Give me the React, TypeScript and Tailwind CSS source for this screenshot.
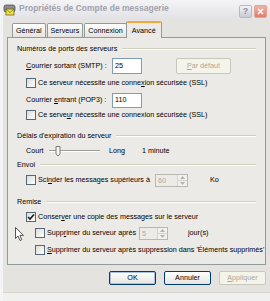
import React from "react"

function U({ children }: { children: React.ReactNode }) {
  return <span className="underline underline-offset-[1px]">{children}</span>
}

function Heading({ title, className = "" }: { title: string; className?: string }) {
  return (
    <div className={`flex items-center pl-[9px] pr-[9px] ${className}`}>
      <span>{title}</span>
      <div className="ml-[5px] flex-1 border-t border-b border-t-[#d0d0bf] border-b-white" />
    </div>
  )
}

function Check({ checked = false }: { checked?: boolean }) {
  return (
    <div className="flex h-[10px] w-[10px] shrink-0 items-center justify-center border border-[#56677a] bg-gradient-to-br from-[#dcdcd7] to-white">
      {checked && (
        <svg width="8" height="8" viewBox="0 0 8 8">
          <path d="M1 4 L3 6 L7 1.5" fill="none" stroke="#1d1d1d" strokeWidth="1.6" />
        </svg>
      )}
    </div>
  )
}

function Spinner({ value, w }: { value: string; w: string }) {
  return (
    <div className={`flex h-[13px] ${w} items-stretch border border-[#b9b8b0] bg-[#ecebe7]`}>
      <span className="flex-1 pl-[2px] leading-[11px] text-[#aca899]">{value}</span>
      <div className="flex w-[10px] flex-col border-l border-[#d4d3cd]">
        <div className="flex flex-1 items-center justify-center border-b border-[#d4d3cd] bg-[#f2f1ee]">
          <svg width="5" height="3" viewBox="0 0 5 3"><path d="M0 3 L2.5 0 L5 3Z" fill="#b4b3ad" /></svg>
        </div>
        <div className="flex flex-1 items-center justify-center bg-[#f2f1ee]">
          <svg width="5" height="3" viewBox="0 0 5 3"><path d="M0 0 L2.5 3 L5 0Z" fill="#b4b3ad" /></svg>
        </div>
      </div>
    </div>
  )
}

function Btn({ children, disabled = false, def = false }: { children: React.ReactNode; disabled?: boolean; def?: boolean }) {
  return (
    <div
      className={`flex h-[14px] w-[47px] items-center justify-center rounded-[2px] border ${
        disabled
          ? "border-[#c9c7ba] bg-[#f5f4ea] text-[#aca899]"
          : "border-[#003c74] bg-gradient-to-b from-white to-[#e6e5df] text-black"
      } ${def ? "shadow-[inset_0_0_0_1px_#a9bfe3]" : ""}`}
    >
      {children}
    </div>
  )
}

function Tab({ label, active = false }: { label: string; active?: boolean }) {
  if (active) {
    return (
      <div className="relative z-10 mb-[-1px] ml-[-2px] flex h-[17px] w-[36px] flex-col rounded-t-[2px] border-x border-[#919b9c] bg-[#ebeae6]">
        <div className="h-[2px] rounded-t-[2px] bg-[#f3a63c]" />
        <div className="flex flex-1 items-center justify-center">{label}</div>
      </div>
    )
  }
  return (
    <div className="mr-[1px] flex h-[14px] items-center justify-center rounded-t-[2px] border-x border-t border-[#919b9c] bg-gradient-to-b from-white to-[#e4e3de] px-[3px]">
      {label}
    </div>
  )
}

export default function App() {
  return (
    <div className="relative flex h-[301px] w-[270px] flex-col overflow-hidden border-l-[3px] border-[#f4f4f4] bg-[#e4e3df] font-['Liberation_Sans',Arial,sans-serif] text-[7.2px] leading-none text-black">
      {/* title bar */}
      <div className="ml-[-3px] flex h-[20px] items-center bg-gradient-to-b from-[#f4f4f6] to-[#e2e2e6] pl-[3px] pr-[3px]">
        <svg width="13" height="13" viewBox="0 0 13 13" className="shrink-0">
          <rect x="1" y="1" width="11" height="7" rx="2" fill="#8b8b8b" stroke="#555" strokeWidth="0.8" />
          <rect x="3" y="5" width="8" height="6" fill="#f2e24a" stroke="#6a6a20" strokeWidth="0.8" />
          <path d="M3 5 L7 8.5 L11 5" fill="none" stroke="#6a6a20" strokeWidth="0.7" />
        </svg>
        <span className="ml-[3px] mt-[-3px] text-[8.5px] font-bold text-[#a2a2ad]">Propriétés de Compte de messagerie</span>
        <div className="flex-1" />
        <div className="mt-[3px] flex h-[13px] w-[13px] items-center justify-center rounded-[2px] border border-[#b8b8c6] bg-gradient-to-b from-[#f4f4f8] to-[#c9c9d4] text-[9px] font-bold text-[#8d8da4]">
          ?
        </div>
        <div className="ml-[2px] mt-[3px] flex h-[13px] w-[13px] items-center justify-center rounded-[2px] border border-[#e0a395] bg-gradient-to-b from-[#f0b4a4] to-[#e07c68]">
          <svg width="7" height="7" viewBox="0 0 7 7">
            <path d="M1 1 L6 6 M6 1 L1 6" stroke="white" strokeWidth="1.5" />
          </svg>
        </div>
      </div>

      <div className="flex flex-col pl-[4px] pr-[4px]">
        {/* tabs */}
        <div className="flex h-[17px] items-end pl-[5px]">
          <Tab label="Général" />
          <Tab label="Serveurs" />
          <Tab label="Connexion" />
          <Tab label="Avancé" active />
        </div>

        {/* panel */}
        <div className="flex h-[228px] flex-col border border-[#919b9c] bg-[#ebeae6] pt-[4px]">
          <Heading title="Numéros de ports des serveurs" className="h-[14px]" />

          <div className="mt-[1px] flex h-[18px] items-center pl-[18px]">
            <span className="w-[86px]"><U>C</U>ourrier sortant (SMTP) :</span>
            <div className="flex h-[16px] w-[30px] items-center border border-[#7f9db9] bg-white pl-[2px]">25</div>
            <div className="ml-[34px] flex h-[16px] w-[55px] items-center justify-center rounded-[2px] border border-[#c9c7ba] bg-[#f5f4ea] text-[#aca899]">
              <U>P</U>ar défaut
            </div>
          </div>

          <div className="flex h-[16px] items-center pl-[18px]">
            <Check />
            <span className="ml-[2px]">Ce serveur nécessite une conne<U>x</U>ion sécurisée (SSL)</span>
          </div>

          <div className="flex h-[18px] items-center pl-[18px]">
            <span className="w-[86px]">Courrier <U>e</U>ntrant (POP3) :</span>
            <div className="flex h-[15px] w-[30px] items-center border border-[#7f9db9] bg-white pl-[2px]">110</div>
          </div>

          <div className="flex h-[12px] items-center pl-[18px]">
            <Check />
            <span className="ml-[2px]">Ce serve<U>u</U>r nécessite une connexion sécurisée (SSL)</span>
          </div>

          <Heading title="Délais d'expiration du serveur" className="mt-[8px] h-[14px]" />

          <div className="flex h-[16px] items-center pl-[18px]">
            <span className="w-[23px]">Court</span>
            <svg width="51" height="12" viewBox="0 0 51 12" className="shrink-0">
              <rect x="0" y="5" width="51" height="1" fill="#9d9c97" />
              <rect x="0" y="6" width="51" height="1" fill="#ffffff" />
              <path d="M7 1.5 H11 V9 L9 11 L7 9 Z" fill="#f6f6f4" stroke="#6f6e6a" strokeWidth="0.9" />
            </svg>
            <span className="ml-[9px] w-[33px]">Long</span>
            <span>1 minute</span>
          </div>

          <Heading title="Envoi" className="h-[12px]" />

          <div className="flex h-[18px] items-center pl-[18px]">
            <Check />
            <span className="ml-[2px] w-[117px]">Sci<U>n</U>der les messages supérieurs à</span>
            <Spinner value="60" w="w-[33px]" />
            <span className="ml-[22px]">Ko</span>
          </div>

          <Heading title="Remise" className="mt-[6px] h-[14px]" />

          <div className="mt-[1px] flex h-[14px] items-center pl-[18px]">
            <Check checked />
            <span className="ml-[2px]">Conser<U>v</U>er une copie des messages sur le serveur</span>
          </div>

          <div className="mt-[1px] flex h-[16px] items-center pl-[27px]">
            <Check />
            <span className="ml-[2px] w-[92px]">Supp<U>r</U>imer du serveur après</span>
            <Spinner value="5" w="w-[29px]" />
            <span className="ml-[20px]">jour(s)</span>
          </div>

          <div className="mt-[2px] flex h-[14px] items-center pl-[27px]">
            <Check />
            <span className="ml-[2px]"><U>S</U>upprimer du serveur après suppression dans 'Éléments supprimés'</span>
          </div>
        </div>

        {/* buttons */}
        <div className="mt-[6px] flex h-[14px] justify-end gap-[8px]">
          <Btn def>OK</Btn>
          <Btn>Annuler</Btn>
          <Btn disabled><U>A</U>ppliquer</Btn>
        </div>
      </div>

      <div className="mt-auto h-[9px] border-t border-[#d6d5d0] bg-[#f0f0ee]" />

      {/* mouse cursor */}
      <svg width="10" height="15" viewBox="0 0 10 15" className="absolute left-[12px] top-[227px]">
        <path d="M0.5 0.5 L0.5 11.5 L3 9 L5 13.5 L6.8 12.7 L4.9 8.4 L8.5 8.4 Z" fill="white" stroke="#444" strokeWidth="0.9" />
      </svg>
    </div>
  )
}
